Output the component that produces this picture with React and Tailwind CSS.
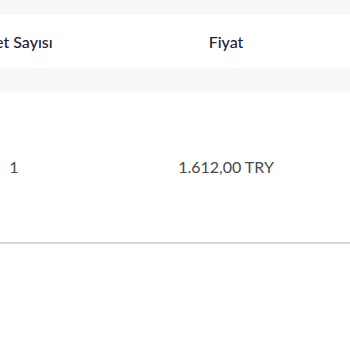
import React from 'react';

const COLS = [
  { head: 'Adet Sayısı', value: '1' },
  { head: 'Fiyat', value: '1.612,00 TRY' },
  { head: 'Toplam', value: '' },
];

export default function App() {
  return (
    <div className="h-[350px] w-[350px] overflow-hidden bg-white" style={{ fontFamily: 'Lato, "Open Sans", sans-serif' }}>
      <div className="h-[15px] bg-[#f8f8f8]" />
      <div className="ml-[-92px] grid h-[53px] w-[636px] grid-cols-3 items-center">
        {COLS.map((c) => (
          <div key={c.head} className="text-center text-[16px] font-medium text-[#1f2233]">
            {c.head}
          </div>
        ))}
      </div>
      <div className="h-[24px] bg-[#f8f8f8]" />
      <div className="ml-[-92px] grid h-[150px] w-[636px] grid-cols-3 items-center">
        {COLS.map((c) => (
          <div key={c.head} className="text-center text-[16px] text-[#4a4a4a]">
            {c.value}
          </div>
        ))}
      </div>
      <div className="h-[2px] bg-[#d6d6d6]" />
    </div>
  );
}
